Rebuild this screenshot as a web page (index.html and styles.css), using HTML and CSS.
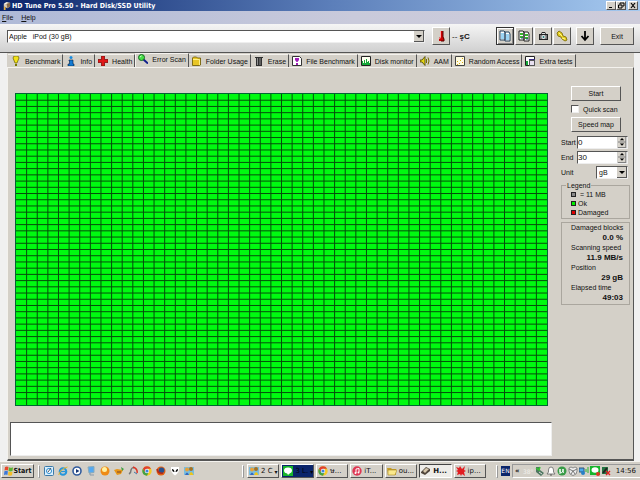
FILE: index.html
```html
<!DOCTYPE html>
<html lang="en">
<head>
<meta charset="utf-8">
<title>HD Tune Pro 5.50 - Hard Disk/SSD Utility</title>
<link rel="stylesheet" href="styles.css">
</head>
<body>
<header class="titlebar">
  <svg class="app-icon" viewBox="0 0 10 10"><path d="M2 3l3-2 4 1v4L6 8 2 6z" fill="#d9cdb8"/><path d="M5 3l4-1v4L6 8z" fill="#8a6a48"/><path d="M2 6l2 1v3H2z" fill="#e8b040"/><path d="M3 3l3-1" stroke="#fff"/></svg>
  <h1>HD Tune Pro 5.50 - Hard Disk/SSD Utility</h1>
  <div class="window-buttons">
    <button aria-label="Minimize"><svg viewBox="0 0 8 7"><path d="M2 5.5h3" stroke="#000"/></svg></button>
    <button aria-label="Restore"><svg viewBox="0 0 8 7"><path d="M3 2.500V1h4v3H5.500M1.500 3h3.500v3h-3.500z" fill="none" stroke="#000"/></svg></button>
    <button class="close" aria-label="Close"><svg viewBox="0 0 8 7"><path d="M2 1l4 5M6 1L2 6" stroke="#000" stroke-width="1.200"/></svg></button>
  </div>
</header>
<nav class="menubar"><a href="#file"><u>F</u>ile</a><a href="#help"><u>H</u>elp</a></nav>

<div class="toolbar">
  <select class="drive" aria-label="Drive"><option>Apple &nbsp; iPod (30 gB)</option></select>
  <button class="tool" aria-label="Temperature"><svg viewBox="0 0 12 12"><path d="M5 1h3v6l1 1v3H4V8l1-1z" fill="#c00"/><path d="M5.500 1v6l-1 2" stroke="#faa" fill="none"/><path d="M8 1v6l1 2v2H6" stroke="#500" fill="none"/></svg></button>
  <span class="temp">-- <b>şC</b></span>
  <div class="tools">
    <button class="tool focused" aria-label="Copy text"><svg viewBox="0 0 12 12"><path d="M1 1h4l1 1v8H1zM6 2h4l1 2v7H6z" fill="#fff" stroke="#23405c"/><path d="M2 4h3M2 6h3M2 8h3M7 5h3M7 7h3M7 9h3" stroke="#38a8e8"/></svg></button>
    <button class="tool" aria-label="Copy screenshot"><svg viewBox="0 0 12 12"><path d="M1 1h4l1 1v8H1zM6 2h4l1 2v7H6z" fill="#fff" stroke="#222"/><path d="M2 4h3M2 7h3M7 5h3M7 8h3" stroke="#36b52d" stroke-width="2"/><path d="M3 8h2M8 9h2" stroke="#247"/></svg></button>
    <button class="tool" aria-label="Save screenshot"><svg viewBox="0 0 12 12"><path d="M2 4h2l1-2h3l1 2h2v6H2z" fill="#222"/><path d="M5 3h3v1H5z" fill="#ddd"/><path d="M3 5h7v4H3z" fill="#777"/><circle cx="6.500" cy="7" r="2" fill="#eee"/><circle cx="6.500" cy="7" r="1" fill="#277"/></svg></button>
    <button class="tool" aria-label="Options"><svg viewBox="0 0 12 12"><path d="M1 3l2-2 3 2 1 3 3 1 1 3-2 1-3-2-1-2-3-1z" fill="#e6cf20" stroke="#8a7a10"/><path d="M3 3l3 3M6 8l3 1" stroke="#fff58a"/></svg></button>
    <button class="tool arrow" aria-label="Minimize to tray"><svg viewBox="0 0 12 12"><path d="M6 1v8M2.500 6L6 10l3.500-4" stroke="#000" stroke-width="1.800" fill="none"/></svg></button>
    <button class="tool exit">Exit</button>
  </div>
</div>

<main class="workspace">
  <div class="tabs" role="tablist">
    <button role="tab"><svg viewBox="0 0 10 10"><path d="M3 0h4l1 2-2 5H4L2 2z" fill="#f2e21a" stroke="#665c00" stroke-width=".7"/><path d="M4 8h2v2H4z" fill="#777700"/></svg>Benchmark</button>
    <button role="tab"><svg viewBox="0 0 10 10"><circle cx="5" cy="1.500" r="1.500" fill="#168be0"/><path d="M3 4h4v4h1v2H2V8h1.500V5H3z" fill="#137bd4" stroke="#024" stroke-width=".6"/></svg>Info</button>
    <button role="tab"><svg viewBox="0 0 10 10"><path d="M3.500 0h3v3.500H10v3H6.500V10h-3V6.500H0v-3h3.500z" fill="#e01818" stroke="#700" stroke-width=".7"/></svg>Health</button>
    <button role="tab" class="selected" aria-selected="true"><svg viewBox="0 0 10 10"><path d="M5.500 5.500L10 9.500" stroke="#10208c" stroke-width="2"/><circle cx="3.500" cy="3.500" r="3" fill="#48df48" stroke="#176b22"/><path d="M2 3l1.500-1" stroke="#dfd"/></svg>Error Scan</button>
    <button role="tab"><svg viewBox="0 0 10 10"><path d="M.5 2l1-1h3l1 1h3v7l-1 .5h-7z" fill="#e8c626" stroke="#6a5500" stroke-width=".8"/><path d="M1 3.500h6.500V9" stroke="#fff08a" fill="none"/></svg>Folder Usage</button>
    <button role="tab"><svg viewBox="0 0 10 10"><path d="M1 1h8v1H8v8H2V2H1z" fill="#303030"/><path d="M3.500 2v7M6 2v7" stroke="#aaa" stroke-width=".8"/></svg>Erase</button>
    <button role="tab"><svg viewBox="0 0 10 10"><path d="M.5.500h7l2 2v7h-9z" fill="#fff" stroke="#333"/><path d="M3 2h4v2L5.500 6h-1L3 4zM4 7h2v2H4z" fill="#a020b8"/></svg>File Benchmark</button>
    <button role="tab"><svg viewBox="0 0 10 10"><path d="M.5.500h9v9h-9z" fill="#fffff0" stroke="#222"/><path d="M1 9V5h1v2h1V4h1v3h1V3h1v3h1V5h1v2h1v2z" fill="#16a83a"/></svg>Disk monitor</button>
    <button role="tab"><svg viewBox="0 0 10 10"><path d="M0 4h2l3-3.500v9L2 6H0z" fill="#e4d514" stroke="#443d00" stroke-width=".8"/><path d="M6.500 3v4M8 1.500q2 3.500 0 7" stroke="#776d00" fill="none"/></svg>AAM</button>
    <button role="tab"><svg viewBox="0 0 10 10"><path d="M.5.500h9v9h-9z" fill="#fffbe0" stroke="#444"/><path d="M2 5h1v1H2zM4 7h1v1H4zM5 4h1v1H5zM7 2h1v1H7zM7 6h1v1H7zM2 8h1v1H2z" fill="#d4a817"/></svg>Random Access</button>
    <button role="tab"><svg viewBox="0 0 10 10"><path d="M.5.500h9v9h-9z" fill="#fff" stroke="#222"/><path d="M1 5h2v4H1z" fill="#16a83a"/><path d="M4 3h6v2H4z" fill="#3a2d80"/><path d="M4.500 4.500h5v5h-5z" fill="#e8e0f0" stroke="#555"/></svg>Extra tests</button>
  </div>
  <section class="page">
    <div class="scan">
      <svg class="blocks" viewBox="0 0 50 50" preserveAspectRatio="none" role="img" aria-label="Scanned blocks"><path id="block-lines"/></svg>
      <textarea class="log" aria-label="Log"></textarea>
    </div>
    <aside class="side">
      <button class="btn">Start</button>
      <label class="check"><input type="checkbox">Quick scan</label>
      <button class="btn">Speed map</button>
      <div class="fields">
        <label for="start">Start</label><div class="spin"><input id="start" value="0"><svg viewBox="0 0 8 10"><use href="#spinner"/></svg></div>
        <label for="end">End</label><div class="spin"><input id="end" value="30"><svg viewBox="0 0 8 10"><use href="#spinner"/></svg></div>
        <label for="unit">Unit</label><select id="unit"><option>gB</option></select>
      </div>
      <fieldset class="legend"><legend>Legend</legend>
        <div><i class="key gray"></i>&nbsp;= 11 MB</div>
        <div><i class="key green"></i>Ok</div>
        <div><i class="key red"></i>Damaged</div>
      </fieldset>
      <dl class="stats">
        <dt>Damaged blocks</dt><dd>0.0 %</dd>
        <dt>Scanning speed</dt><dd>11.9 MB/s</dd>
        <dt>Position</dt><dd>29 gB</dd>
        <dt>Elapsed time</dt><dd>49:03</dd>
      </dl>
    </aside>
  </section>
</main>

<footer class="taskbar">
  <button class="start"><svg viewBox="0 0 10 10"><path d="M1 1q2-1 3.500 0L4 4.500q-2-1-3.500 0z" fill="#e8492c"/><path d="M5 1.200q2 1 4 0L8.500 5q-2 .8-4 0z" fill="#5cb431"/><path d="M.4 5.200q2-1 3.500 0L3.400 9Q2 8 0 9z" fill="#3b78d8"/><path d="M4.500 5.600q2 1 4 0L8 9.300q-2 .8-4 0z" fill="#f5bd26"/></svg>Start</button>
  <i class="grip"></i>
  <div class="quick">
    <svg viewBox="0 0 10 10"><rect x=".5" y=".5" width="9" height="9" rx="1" fill="#d8efff" stroke="#3c7aa8"/><circle cx="5" cy="5" r="2.500" fill="#fff" stroke="#2588cc"/><path d="M4 6l3-4" stroke="#456"/></svg>
    <svg viewBox="0 0 10 10"><circle cx="5" cy="5.500" r="3.300" fill="none" stroke="#2495dc" stroke-width="2"/><path d="M2.500 5.500h5" stroke="#2495dc" stroke-width="1.300"/><path d="M.7 9Q2 3 9.500 1" stroke="#e3b52c" fill="none"/></svg>
    <svg viewBox="0 0 10 10"><circle cx="5" cy="5" r="4" fill="#fff" stroke="#315a9c" stroke-width="1.600"/><path d="M4 3l3.500 2L4 7z" fill="#173775"/></svg>
    <svg viewBox="0 0 10 10"><path d="M2 1l6-.5v6L3 7z" fill="#54a9f2" stroke="#8ab"/><path d="M4 7v2h4" stroke="#89a" fill="none"/></svg>
    <svg viewBox="0 0 10 10"><circle cx="5" cy="5" r="4.500" fill="#ef8b15"/><circle cx="4.500" cy="3.500" r="2.500" fill="#fff0a0"/></svg>
    <svg viewBox="0 0 10 10"><path d="M0 4l3-1 6 1-2 4-4 1z" fill="#e89618"/><path d="M7 1l3 2-2 2z" fill="#3fa03f"/><path d="M3 6h4" stroke="#743"/></svg>
    <svg viewBox="0 0 10 10"><path d="M1 8Q3 7 3 4q1-3 3-2" stroke="#777" stroke-width="1.500" fill="none"/><path d="M5 1q5 2 4 6" stroke="#dc3524" stroke-width="1.500" fill="none"/><path d="M6 6l3 2" stroke="#47a"/></svg>
    <svg viewBox="0 0 10 10"><g id="chrome"><circle cx="5" cy="5" r="4.700" fill="#f6ca28"/><path d="M.9 2.700A4.700 4.700 0 0 1 9.100 2.700H5L3 6z" fill="#df4032"/><path d="M.9 2.700A4.700 4.700 0 0 0 5 9.700L6.500 6.500 3 6z" fill="#43a047"/><circle cx="5" cy="5" r="2.200" fill="#fff"/><circle cx="5" cy="5" r="1.600" fill="#3f83df"/></g></svg>
    <svg viewBox="0 0 10 10"><circle cx="5" cy="5" r="4.500" fill="#df6017"/><circle cx="5.500" cy="4.300" r="2.800" fill="#27508e"/><path d="M1 3q1 5 6 4" stroke="#b52a18" stroke-width="1.500" fill="none"/></svg>
    <svg viewBox="0 0 10 10"><path d="M1 1h8q1 5-4 8.500Q0 6 1 1z" fill="#fff"/><path d="M2 3q2 0 2.500 3Q2 6 2 3zM8 3Q6 3 5.500 6 8 6 8 3z" fill="#000"/></svg>
    <svg viewBox="0 0 10 10"><g id="people"><path d="M0 1h10v8H0z" fill="#79bde0"/><circle cx="3" cy="3.500" r="2" fill="#e5a23a"/><circle cx="7" cy="3" r="2" fill="#a77220"/><path d="M1 9q2-5 4 0z" fill="#356ac1"/><path d="M5 9q2-6 4.500 0z" fill="#eec51a"/></g></svg>
  </div>
  <i class="grip"></i>
  <div class="tasks">
    <button><svg viewBox="0 0 10 10"><use href="#people"/></svg><span>2 C</span><small>▾</small></button>
    <button class="alert"><svg viewBox="0 0 10 10"><path d="M0 0h10v10H0z" fill="#18b52c"/><ellipse cx="5" cy="4.500" rx="4" ry="3" fill="#fff"/><path d="M4 7l1 2 2-2z" fill="#fff"/></svg><span>3 L.</span><small>▾</small></button>
    <button><svg viewBox="0 0 10 10"><use href="#chrome"/></svg><span>ษ...</span></button>
    <button><svg viewBox="0 0 10 10"><circle cx="5" cy="5" r="4.700" fill="#df3855"/><path d="M4 7V3l3-.5V6" stroke="#fff" fill="none"/><circle cx="3.500" cy="7" r="1" fill="#fff"/><circle cx="6.500" cy="6.500" r="1" fill="#fff"/></svg><span>iT...</span></button>
    <button><svg viewBox="0 0 10 10"><path d="M0 2h4l1 1h4v6H1z" fill="#c79e28"/><path d="M1 4h9L8 9H1z" fill="#fae88c" stroke="#a78624" stroke-width=".6"/></svg><span>ou...</span></button>
    <button class="active"><svg viewBox="0 0 10 10"><path d="M0 6l5-5 4 2v2L4 9 0 7z" fill="#4f443a"/><path d="M2 5l3-3 3 1-4 4z" fill="#d7c7ac"/></svg><span>H...</span></button>
    <button><svg viewBox="0 0 10 10"><path d="M0 1l3 1 1-2 2 3 3-3-1 4 2 1-2 1 1 4-3-2-1 2-1-2-3 1 1-3-2-1 2-1z" fill="#e21d20"/></svg><span>ip...</span></button>
  </div>
  <i class="grip"></i>
  <span class="lang">EN</span>
  <div class="tray">
    <b>«</b><span class="degrees">38°</span>
    <svg viewBox="0 0 10 10"><path d="M1 1h4v3l4 3-3 3-5-4z" fill="#4d7660"/><path d="M1 2l3 2 1-3" stroke="#38c434" stroke-width="1.500" fill="none"/><path d="M4 6l3 2" stroke="#ddd"/></svg>
    <svg viewBox="0 0 10 10"><path d="M1 8l1.500-2V4q0-3 2.500-3t2.500 3v2L9 8z" fill="#fff" stroke="#666" stroke-width=".8"/><path d="M4 9h2" stroke="#555"/></svg>
    <svg viewBox="0 0 10 10"><circle cx="5" cy="5" r="4.500" fill="#399b47"/><path d="M3 8V3v3q2 2 3-1V3v3l1 .5" stroke="#fff" fill="none"/></svg>
    <svg viewBox="0 0 10 10"><path d="M1 2l2-1 2 1 2-1 2 1v3L8 8 5 9.500 2 8 1 5z" fill="#eee" stroke="#666" stroke-width=".7"/><path d="M1 3l4 2 4-2M5 5L3 8M5 5l2 3" stroke="#777" fill="none"/></svg>
    <svg viewBox="0 0 10 10"><path d="M0 2h5v4H0z" fill="#49a9ee" stroke="#357"/><circle cx="4" cy="7" r="2" fill="#2780c7"/><path d="M7 3v3M9 1v6" stroke="#2bb52e"/></svg>
    <svg viewBox="0 0 10 10"><path d="M0 0h10v9H0z" fill="#17b52c"/><ellipse cx="5" cy="4" rx="3.500" ry="2.700" fill="#fff"/><circle cx="8" cy="8" r="2" fill="#df3324"/></svg>
    <svg viewBox="0 0 10 10"><path d="M1 1h6v7H1z" fill="#237443"/><path d="M2 7l4-5" stroke="#222" stroke-width="2"/><path d="M5 5l4 4M9 5L5 9" stroke="#d22" stroke-width="1.400"/></svg>
    <time>14:56</time>
  </div>
</footer>
<svg class="defs"><g id="spinner"><path d="M0 0h8v10H0z" fill="#808080"/><path d="M0 0h7v4H0zM0 5h7v4H0z" fill="#d8d4cc"/><path d="M2 3h4L4 1zM2 6h4L4 8z" fill="#000"/></g></svg>
<script src="blocks.js"></script>
</body>
</html>
```
FILE: styles.css
```css
* { box-sizing: border-box; }
body {
  margin: 0; height: 100vh; display: flex; flex-direction: column; overflow: hidden;
  background: #d4d0c8; color: #111; font: 7px/9px "Liberation Sans", sans-serif;
}
button, input, select, textarea { font: inherit; color: inherit; margin: 0; padding: 0; border-radius: 0; }
svg { display: block; flex: none; }
.defs { position: absolute; width: 0; height: 0; }
button {
  background: #d4d0c8; border: 1px solid; border-color: #fff #555 #555 #fff;
  display: flex; align-items: center; justify-content: center;
}
.titlebar {
  height: 11px; flex: none; display: flex; align-items: center; padding: 0 2px 0 2px; gap: 1px;
  background: linear-gradient(90deg, #0a246a, #5c7fba 52%, #a6caf0);
}
.app-icon { width: 9px; height: 9px; }
h1 { margin: 0; flex: 1; color: #fff; font: bold 7px/10px "DejaVu Sans Condensed", "DejaVu Sans", sans-serif; }
.window-buttons { display: flex; }
.window-buttons button { width: 10px; height: 9px; }
.window-buttons .close { margin-left: 2px; }
.window-buttons svg { width: 8px; height: 7px; }
.menubar { height: 13px; flex: none; display: flex; gap: 8px; padding: 2px 2px; background: linear-gradient(90deg, #aeb9d7, #c9cadb 55%, #ceccda); }
.menubar a { color: #111; text-decoration: none; }

.toolbar {
  height: 29px; flex: none; display: flex; align-items: center; padding: 0 6px 4px 7px;
  background: linear-gradient(#f5f5f5, #d0d0d0); border-bottom: 1px solid #555;
}
select {
  appearance: none; background-color: #fff; border: 1px solid; border-color: #555 #eee #eee #555;
  background-repeat: no-repeat; background-position: right top; background-size: 10px 100%;
  background-image: url("data:image/svg+xml,%3Csvg xmlns='http://www.w3.org/2000/svg' viewBox='0 0 10 11' preserveAspectRatio='none'%3E%3Cpath d='M0 0h10v11H0z' fill='%23555'/%3E%3Cpath d='M0 0h9v10H0z' fill='%23d4d0c8'/%3E%3Cpath d='M2 4h6L5 7z'/%3E%3C/svg%3E");
}
.drive { flex: 1; height: 13px; padding-left: 1px; }
.tool { width: 18px; height: 18px; }
.tool svg { width: 12px; height: 12px; }
.drive + .tool { margin-left: 7px; }
.focused { border: 1px solid #333; box-shadow: inset 1px 1px #fff, inset -1px -1px #888; }
.temp { width: 46px; padding-left: 2px; font-size: 8px; }
.tools { display: flex; gap: 1px; }
.arrow { margin-left: 4px; }
.exit { width: 34px; margin-left: 5px; }

.workspace { flex: 1; min-height: 0; display: flex; flex-direction: column; padding: 0 6px 0 7px; background: #f0f0f0; }
.tabs { display: flex; align-items: flex-end; height: 14px; flex: none; padding-left: 1px; background: #d4d0c8; }
.tabs button {
  height: 13px; padding: 0 2px 0 3px; gap: 4px; border-width: 1px 1px 0 0;
  border-color: #f4f2ee #555 #555 #f4f2ee; white-space: nowrap;
}
.tabs svg { width: 10px; height: 10px; }
.tabs .selected { height: 14px; padding: 0 2px 3px 2px; border-left-width: 1px; }
.page {
  flex: 1; min-height: 0; display: grid; grid-template: minmax(0, 1fr) / minmax(0, 1fr) 69px; gap: 9px; padding: 0 3px 0 2px;
  background: #d4d0c8; border: 1px solid; border-color: #f4f2ee #555 #555 #f4f2ee; border-bottom-width: 2px;
}
.scan { display: flex; flex-direction: column; min-height: 0; padding-top: 25px; }
.blocks { flex: 1 1 0; height: 0; min-height: 0; margin: 0 4px 0 5px; width: calc(100% - 9px); background: #00fa10; border: 1px solid #063; }
.blocks path { fill: none; stroke: #064d0c; stroke-width: 1px; vector-effect: non-scaling-stroke; shape-rendering: crispEdges; }
.log { height: 34px; flex: none; margin: 16px 0 3px; resize: none; display: block; width: 100%; background: #fff; border: 1px solid; border-color: #555 #eee #eee #555; }
.side { padding-top: 18px; }
.btn { width: 50px; height: 15px; margin-left: 10px; }
.check { display: flex; align-items: center; gap: 4px; height: 16px; margin-left: 10px; white-space: nowrap; }
.check input { appearance: none; width: 8px; height: 8px; background: #fff; border: 1px solid; border-color: #555 #eee #eee #555; }
.fields { display: grid; grid-template-columns: 16px minmax(0, 1fr); grid-auto-rows: 13px; row-gap: 2px; align-items: center; margin-top: 4px; padding-right: 2px; }
.spin { display: flex; height: 13px; background: #fff; border: 1px solid; border-color: #555 #eee #eee #555; }
.spin input { flex: 1; min-width: 0; border: 0; background: none; font-size: 8px; }
.spin svg { width: 10px; height: 11px; }
.fields select { width: 32px; height: 13px; justify-self: end; padding-left: 2px; }
.legend { margin: 2px 0 0; padding: 0 0 1px 9px; border: 1px solid #aaa69e; min-width: 0; }
.legend legend { margin-left: -5px; padding: 0 1px; }
.legend div { display: flex; align-items: center; gap: 2px; }
.key { width: 5px; height: 5px; border: 1px solid #222; }
.gray { background: #888; }
.green { background: #0e0; }
.red { background: #d00; }
.stats { margin: 3px 0 0; padding: 0 6px 1px 9px; border: 1px solid #aaa69e; line-height: 10px; white-space: nowrap; }
.stats dd { margin: 0; text-align: right; font-weight: bold; font-size: 8px; }

.taskbar { height: 19px; flex: none; display: flex; align-items: center; padding-left: 1px; border-top: 1px solid #f4f2ee; white-space: nowrap; font-family: "DejaVu Sans", sans-serif; }
.start { width: 33px; height: 14px; gap: 0; font: bold 7px/9px "DejaVu Sans Condensed", "DejaVu Sans", sans-serif; }
.taskbar svg { width: 10px; height: 10px; }
.grip { width: 2px; height: 13px; margin: 0 3px 0 4px; border: 1px solid; border-color: #fff #999 #999 #fff; }
.quick { display: flex; gap: 4px; flex: 0 0 195px; padding-left: 1px; }
.tasks { flex: 1; display: grid; grid-template-columns: repeat(7, 1fr); gap: 2px; }
.tasks button { height: 14px; min-width: 0; padding: 0 1px; gap: 2px; justify-content: flex-start; overflow: hidden; }
.tasks small { font-size: 6px; margin-left: auto; }
.tasks .alert { background: #0a246a; color: #02030a; }
.tasks .active { background: #eeece8; border-color: #444 #fff #fff #444; font-weight: bold; }
.tasks + .grip { margin-left: 10px; }
.lang { width: 9px; background: #0a246a; color: #fff; font-size: 6px; line-height: 10px; text-align: center; }
.tray { width: 128px; height: 14px; margin-left: 2px; padding: 0 4px 0 2px; display: flex; align-items: center; gap: 1px; border: 1px solid; border-color: #999 #fff #fff #999; border-right: 0; }
.degrees { width: 13px; color: #f2f0ec; font-size: 6px; text-align: right; }
.tray time { margin-left: auto; font-size: 7px; }
```
FILE: blocks.js
```js
const columns = 50, rows = 50;
let d = "";
for (let i = 1; i < columns; i++) d += `M${i} 0V${rows}`;
for (let i = 1; i < rows; i++) d += `M0 ${i}H${columns}`;
document.getElementById("block-lines").setAttribute("d", d);
```
